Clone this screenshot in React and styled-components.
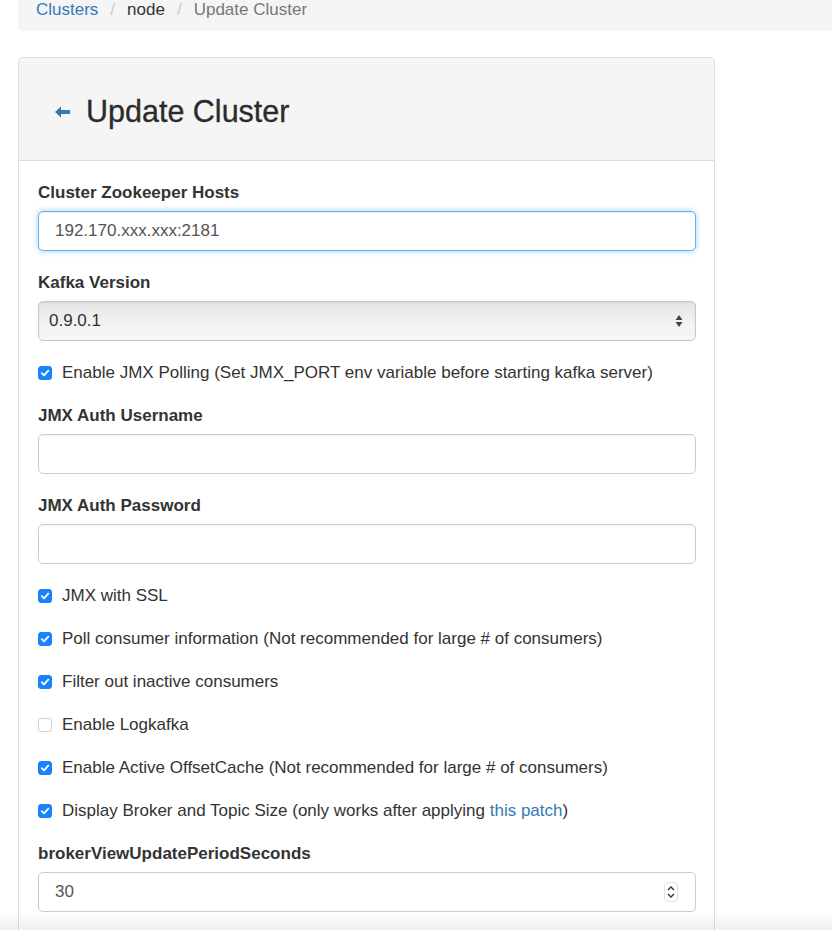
import styled, { createGlobalStyle } from "styled-components";

const GlobalStyle = createGlobalStyle`
  html, body {
    margin: 0;
    padding: 0;
    background: #fff;
    overflow: hidden;
  }
  body {
    font-family: "Liberation Sans", Arial, sans-serif;
    font-size: 17px;
    color: #333;
  }
  * { box-sizing: border-box; }
`;

const Page = styled.div`
  padding: 0 0 0 18px;
  height: 930px;
`;

const Breadcrumb = styled.ol`
  list-style: none;
  margin: 0 0 26px;
  padding: 0 18px 11px;
  width: 100%;
  height: 31px;
  line-height: 20px;
  background: #f5f5f5;
  border-radius: 0 0 0 5px;
  display: flex;
`;

const Crumb = styled.li`
  color: ${p => (p.$active ? "#777" : "#333")};
  &:not(:first-child)::before {
    content: "/";
    color: #ccc;
    padding: 0 12px;
  }
  a {
    color: #337ab7;
    text-decoration: none;
  }
`;

const Panel = styled.div`
  width: 697px;
  border: 1px solid #ddd;
  border-radius: 5px;
  background: #fff;
`;

const PanelHeading = styled.div`
  background: #f5f5f5;
  border-bottom: 1px solid #ddd;
  border-radius: 5px 5px 0 0;
  padding: 37px 36px 32px;
  display: flex;
  align-items: center;
  gap: 16px;
`;

const Title = styled.h3`
  margin: 0;
  font-size: 30.5px;
  line-height: 33px;
  font-weight: 500;
  color: #2b2b2b;
  -webkit-text-stroke: 0.3px #2b2b2b;
`;

const PanelBody = styled.div`
  padding: 21px 18px 0 19px;
`;

const Group = styled.div`
  margin-bottom: 21px;
`;

const Label = styled.label`
  display: block;
  font-weight: bold;
  line-height: 22px;
  margin-bottom: 7px;
`;

const Input = styled.input`
  display: block;
  width: 100%;
  height: 40px;
  padding: 0 16px;
  font: inherit;
  font-size: 17px;
  color: #555;
  background: #fff;
  border: 1px solid ${p => (p.$focus ? "#66afe9" : "#ccc")};
  border-radius: 5px;
  outline: none;
  box-shadow: ${p =>
    p.$focus
      ? "inset 0 1px 1px rgba(0,0,0,.075), 0 0 6px rgba(102,175,233,.6)"
      : "inset 0 1px 1px rgba(0,0,0,.04)"};
`;

const FakeSelect = styled.div`
  height: 40px;
  padding: 0 12px 0 10px;
  display: flex;
  align-items: center;
  justify-content: space-between;
  color: #333;
  border: 1px solid #c8c8c8;
  border-radius: 5px;
  background: linear-gradient(#e6e6e6, #f3f3f3 60%, #f6f6f6);
  box-shadow: inset 0 1px 2px rgba(0,0,0,.08);
`;

const NumberBox = styled.div`
  height: 40px;
  padding: 0 17px 0 16px;
  display: flex;
  align-items: center;
  justify-content: space-between;
  color: #555;
  border: 1px solid #ccc;
  border-radius: 5px;
  background: #fff;
`;

const Spinner = styled.div`
  width: 14px;
  height: 20px;
  border-radius: 4px;
  border: 1px solid #e4e4e4;
  display: flex;
  align-items: center;
  justify-content: center;
`;

const CheckRow = styled.div`
  display: flex;
  align-items: center;
  gap: 10px;
  line-height: 22px;
  margin-bottom: 21px;
  a {
    color: #337ab7;
    text-decoration: none;
  }
`;

const Box = styled.span`
  width: 14px;
  height: 14px;
  flex: none;
  border-radius: 3px;
  display: flex;
  align-items: center;
  justify-content: center;
  background: ${p => (p.$checked ? "#1a82fb" : "#fff")};
  border: 1px solid ${p => (p.$checked ? "#1a82fb" : "#cfcfcf")};
`;

const BottomFade = styled.div`
  position: fixed;
  left: 0;
  right: 0;
  bottom: 0;
  height: 20px;
  background: linear-gradient(rgba(0,0,0,0), rgba(0,0,0,.06));
  pointer-events: none;
`;

function Check({ checked, children }) {
  return (
    <CheckRow>
      <Box $checked={checked}>
        {checked && (
          <svg width="10" height="10" viewBox="0 0 10 10">
            <path d="M1.8 5.2 L4 7.3 L8.3 2.6" fill="none" stroke="#fff" strokeWidth="1.8" strokeLinecap="round" strokeLinejoin="round" />
          </svg>
        )}
      </Box>
      <span>{children}</span>
    </CheckRow>
  );
}

export default function App() {
  return (
    <Page>
      <GlobalStyle />
      <Breadcrumb>
        <Crumb><a href="#">Clusters</a></Crumb>
        <Crumb>node</Crumb>
        <Crumb $active>Update Cluster</Crumb>
      </Breadcrumb>
      <Panel>
        <PanelHeading>
          <svg width="15" height="12" viewBox="0 0 15 12">
            <path d="M0 6 L6 0.5 L6 4 L15 4 L15 8 L6 8 L6 11.5 Z" fill="#337ab7" />
          </svg>
          <Title>Update Cluster</Title>
        </PanelHeading>
        <PanelBody>
          <Group>
            <Label>Cluster Zookeeper Hosts</Label>
            <Input $focus defaultValue="192.170.xxx.xxx:2181" />
          </Group>
          <Group>
            <Label>Kafka Version</Label>
            <FakeSelect>
              <span>0.9.0.1</span>
              <svg width="8" height="14" viewBox="0 0 8 14">
                <path d="M4 1 L7.5 6 L0.5 6 Z M4 13 L7.5 8 L0.5 8 Z" fill="#444" />
              </svg>
            </FakeSelect>
          </Group>
          <Check checked>Enable JMX Polling (Set JMX_PORT env variable before starting kafka server)</Check>
          <Group>
            <Label>JMX Auth Username</Label>
            <Input />
          </Group>
          <Group>
            <Label>JMX Auth Password</Label>
            <Input type="password" />
          </Group>
          <Check checked>JMX with SSL</Check>
          <Check checked>Poll consumer information (Not recommended for large # of consumers)</Check>
          <Check checked>Filter out inactive consumers</Check>
          <Check>Enable Logkafka</Check>
          <Check checked>Enable Active OffsetCache (Not recommended for large # of consumers)</Check>
          <Check checked>
            Display Broker and Topic Size (only works after applying <a href="#">this patch</a>)
          </Check>
          <Group>
            <Label>brokerViewUpdatePeriodSeconds</Label>
            <NumberBox>
              <span>30</span>
              <Spinner>
                <svg width="8" height="14" viewBox="0 0 8 14">
                  <path d="M1 5 L4 2 L7 5 M1 9 L4 12 L7 9" fill="none" stroke="#333" strokeWidth="1.4" />
                </svg>
              </Spinner>
            </NumberBox>
          </Group>
        </PanelBody>
      </Panel>
      <BottomFade />
    </Page>
  );
}
